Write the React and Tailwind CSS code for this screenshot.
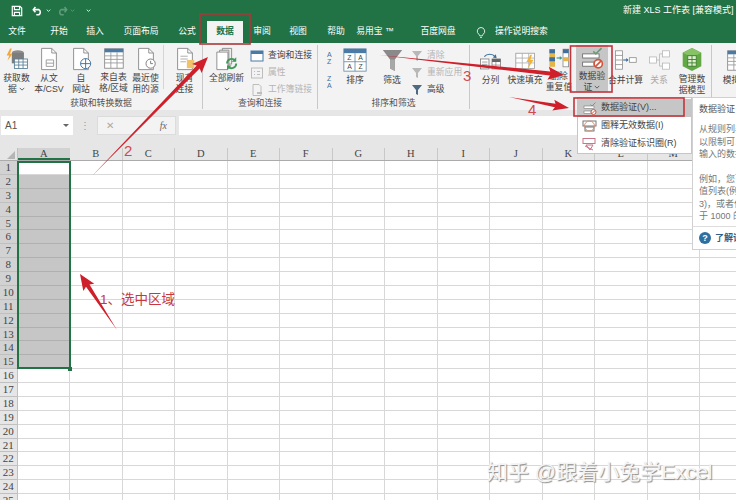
const tabs = [
  ["文件", 34, 0], ["开始", 34, 8], ["插入", 34, 2], ["页面布局", 50, 4], ["公式", 34, 4],
  ["数据", 36, 3], ["审阅", 36, 1], ["视图", 36, 0], ["帮助", 36, 2], ["易用宝 ™", 46, -2], ["百度网盘", 56, 12],
];

const Doc = ({ children }) => (
  <svg viewBox="0 0 26 26" className="w-[24px] h-[24px]" fill="none">
    <path d="M5 1.500h11l5 5v18H5z" fill="#fff" stroke="#8a8a8a" />
    <path d="M16 1.500v5h5" stroke="#8a8a8a" />
    {children}
  </svg>
);

const GetData = () => (
  <svg viewBox="0 0 30 26" className="w-[26px] h-[24px]" fill="none">
    <ellipse cx="16" cy="6" rx="7" ry="3" fill="#8c8c8c" />
    <rect x="9" y="6" width="14" height="12" fill="#7d7d7d" />
    <path d="M7 1 3 9h3l-2 6 6-8H7l2-6z" fill="#f2a93b" />
    <rect x="12" y="13" width="15" height="11" fill="#fff" stroke="#5b7f95" />
    <path d="M12 16.500h15M12 20h15M17 13v11M22 13v11" stroke="#5b7f95" />
  </svg>
);

const TableIcon = () => (
  <svg viewBox="0 0 26 26" className="w-[23px] h-[23px]" fill="none">
    <rect x="3" y="2" width="21" height="22" fill="#fff" stroke="#8a8a8a" />
    <rect x="3" y="2" width="21" height="4" fill="#4a7ba6" />
    <path d="M3 10h21M3 14h21M3 18h21M10 6v18M17 6v18" stroke="#9a9a9a" />
  </svg>
);

const Refresh = () => (
  <svg viewBox="0 0 26 26" className="w-[24px] h-[24px]" fill="none">
    <path d="M8 1.500h10v17H8z" fill="#eee" stroke="#8a8a8a" />
    <path d="M5 3.500h10v18H5z" fill="#f6f6f6" stroke="#8a8a8a" />
    <path d="M2 5.500h12v19H2z" fill="#fff" stroke="#8a8a8a" />
    <path d="M13 18a5 5 0 0 1 9-3M23 18a5 5 0 0 1-9 3" stroke="#3f9a57" strokeWidth="2" />
    <path d="M23 11v5h-5zM13 25v-5h5z" fill="#3f9a57" />
  </svg>
);

const SortBig = () => (
  <svg viewBox="0 0 28 28" className="w-[24px] h-[24px]" fill="none">
    <rect x="1" y="1" width="26" height="26" fill="#fff" stroke="#6b8ca8" />
    <rect x="1" y="1" width="26" height="5" fill="#4a7ba6" />
    <path d="M14 6v21M1 16h26" stroke="#6b8ca8" />
    <text x="7.500" y="14.500" textAnchor="middle" fontSize="8" fill="#444">Z</text>
    <text x="20.500" y="14.500" textAnchor="middle" fontSize="8" fill="#444">A</text>
    <text x="7.500" y="25" textAnchor="middle" fontSize="8" fill="#444">A</text>
    <text x="20.500" y="25" textAnchor="middle" fontSize="8" fill="#444">Z</text>
  </svg>
);

const Funnel = () => (
  <svg viewBox="0 0 26 26" className="w-[21px] h-[23px]" preserveAspectRatio="none">
    <path d="M1 1h24L16 12v13l-6-3V12z" fill="#8a8a8a" />
    <path d="M10 12h6v13l-6-3z" fill="#a8a8a8" />
  </svg>
);

const Split = () => (
  <svg viewBox="0 0 30 26" className="w-[23px] h-[23px]" fill="none">
    <path d="M7 8a8 6 0 0 1 14 0" stroke="#3f6f9c" strokeWidth="1.500" />
    <path d="M23 10l-5-1 4-4z" fill="#3f6f9c" />
    <rect x="2" y="11" width="11" height="13" fill="#fff" stroke="#777" />
    <path d="M4 15h7M4 18h7M4 21h7" stroke="#888" />
    <rect x="17" y="11" width="11" height="13" fill="#fff" stroke="#777" />
    <rect x="17" y="11" width="11" height="4" fill="#666" />
    <path d="M17 19h11M22 15v9" stroke="#888" />
  </svg>
);

const FlashFill = () => (
  <svg viewBox="0 0 26 26" className="w-[21px] h-[21px]" fill="none">
    <rect x="1" y="4" width="23" height="19" fill="#fff" stroke="#999" />
    <path d="M1 10h23M1 16h23M9 4v19M17 4v19" stroke="#aaa" />
    <path d="M19 6l-5 9h4l-2 8 7-11h-4l2-6z" fill="#f2b233" />
  </svg>
);

const Dedupe = () => (
  <svg viewBox="0 0 30 26" className="w-[24px] h-[22px]" fill="none">
    <rect x="3" y="2" width="7" height="22" fill="#e4b64a" />
    <path d="M3 2h7v5H3zM3 12h7v5H3z" fill="#3f6f9c" />
    <rect x="20" y="2" width="7" height="22" fill="#fff" stroke="#888" />
    <path d="M20 2h7v5h-7z" fill="#3f6f9c" />
    <path d="M20 12h7v5h-7z" fill="#e4b64a" />
    <path d="M12 13h6" stroke="#3f9a8c" strokeWidth="1.500" />
    <path d="M19 13l-3-2.500v5z" fill="#3f9a8c" />
  </svg>
);

const Validate = ({ small }) => (
  <svg viewBox="0 0 28 26" className={small ? "w-[14px] h-[13px]" : "w-[23px] h-[22px]"} fill="none">
    <rect x="2" y="8" width="20" height="5" fill="#fff" stroke="#666" />
    <rect x="2" y="18" width="14" height="5" fill="#fff" stroke="#666" />
    <path d="M15 5l3 3 7-7" stroke="#6f9a7a" strokeWidth="2" />
    <circle cx="21" cy="20" r="5" fill="#fff" stroke="#d0553f" strokeWidth="2" />
    <path d="M17.500 23.500l7-7" stroke="#d0553f" strokeWidth="2" />
  </svg>
);

const Merge = () => (
  <svg viewBox="0 0 30 26" className="w-[23px] h-[22px]" fill="none">
    <rect x="2" y="1" width="9" height="24" fill="#fff" stroke="#888" />
    <path d="M2 7h9M2 13h9M2 19h9" stroke="#888" />
    <path d="M12 13h6" stroke="#3f6f9c" strokeWidth="1.500" />
    <path d="M19 13l-3-2.500v5z" fill="#3f6f9c" />
    <rect x="20" y="10" width="9" height="6" fill="#fff" stroke="#888" />
  </svg>
);

const Relation = () => (
  <svg viewBox="0 0 30 26" className="w-[23px] h-[22px]" fill="none" stroke="#b5b5b5">
    <rect x="2" y="9" width="9" height="8" fill="#fff" />
    <rect x="19" y="1" width="9" height="8" fill="#fff" />
    <rect x="19" y="17" width="9" height="8" fill="#fff" />
    <path d="M11 13h4M15 5v16M15 5h4M15 21h4" />
  </svg>
);

const DataModel = () => (
  <svg viewBox="0 0 26 26" className="w-[22px] h-[25px]" preserveAspectRatio="none" fill="none">
    <path d="M13 1l11 5v14l-11 5-11-5V6z" fill="#62a845" />
    <path d="M13 1l11 5-11 5L2 6z" fill="#86c266" />
    <rect x="8" y="9" width="10" height="11" fill="#dff0d2" stroke="#3d7f2a" />
    <path d="M8 13h10M8 16.500h10M13 9v11" stroke="#3d7f2a" />
  </svg>
);

const SmallIcon = ({ kind, muted }) => {
  const c = muted ? "#bdbdbd" : "#666";
  if (kind === "funnel")
    return (
      <svg viewBox="0 0 12 12" className="w-3 h-3">
        <path d="M1 1h10L7 6v5L5 10V6z" fill={muted ? "#b8b8b8" : "#4d6a80"} />
      </svg>
    );
  return (
    <svg viewBox="0 0 14 14" className="w-[14px] h-[14px]" fill="none">
      {kind === "query" && (
        <>
          <rect x="1" y="2" width="12" height="10" fill="#fff" stroke="#4a7ba6" />
          <rect x="1" y="2" width="12" height="3" fill="#4a7ba6" />
        </>
      )}
      {kind === "prop" && (
        <>
          <rect x="1.500" y="2" width="11" height="10" stroke={c} />
          <path d="M4 5.500h1M7 5.500h3M4 8.500h1M7 8.500h3" stroke={c} />
        </>
      )}
      {kind === "link" && (
        <>
          <path d="M3 1.500h6l2 2v9H3z" stroke={c} />
          <path d="M7 10h5" stroke={c} strokeWidth="2" />
        </>
      )}
    </svg>
  );
};

const Chevron = () => (
  <svg viewBox="0 0 8 5" className="inline-block w-[6px] h-[4px] ml-0.5 align-middle" fill="none">
    <path d="M1 1l3 3 3-3" stroke="#555" strokeWidth="1.200" />
  </svg>
);

const RibbonBtn = ({ w, icon, lines, muted, active, ml = 0 }) => (
  <div className={`flex flex-col items-center shrink-0 h-[47px] pt-0.5 ${active ? "bg-[#c6c6c6]" : ""}`} style={{ width: w, marginLeft: ml }}>
    <div className="h-[26px] flex items-center justify-center">{icon}</div>
    <div className={`text-center text-[8.800px] leading-[10.500px] mt-0.5 whitespace-nowrap ${muted ? "text-[#aaa]" : "text-[#444]"}`}>
      {lines.map((l, i) => (
        <div key={i}>{l}</div>
      ))}
    </div>
  </div>
);

const SmallRow = ({ kind, label, muted }) => (
  <div className={`flex items-center gap-1 h-[17px] text-[8.800px] whitespace-nowrap ${muted ? "text-[#b5b5b5]" : "text-[#444]"}`}>
    <SmallIcon kind={kind} muted={muted} />
    {label}
  </div>
);

const Group = ({ w, label, children }) => (
  <div className="flex flex-col shrink-0 border-r border-[#c8c8c8] h-[64px] mt-[2px]" style={{ width: w }}>
    <div className="flex h-[50px] items-start">{children}</div>
    <div className="mt-auto text-center text-[8.800px] leading-[11px] text-[#555]">{label}</div>
  </div>
);

const Ribbon = () => (
  <div className="flex h-[67px] bg-[#f3f3f3] overflow-hidden">
    <Group w={203} label="获取和转换数据">
      <RibbonBtn w={33} icon={<GetData />} lines={["获取数", <>据<Chevron /></>]} />
      <RibbonBtn w={32} icon={<Doc><path d="M10 14h8v7h-8zM10 17.500h8" stroke="#999" /></Doc>} lines={["从文", "本/CSV"]} />
      <RibbonBtn w={32} icon={<Doc><circle cx="18" cy="18" r="5.500" fill="#fff" stroke="#3f6f9c" /><path d="M12.500 18h11M18 12.500v11" stroke="#3f6f9c" /></Doc>} lines={["自", "网站"]} />
      <RibbonBtn w={33} icon={<TableIcon />} lines={["来自表", "格/区域"]} />
      <RibbonBtn w={31} icon={<Doc><circle cx="18" cy="18" r="5" fill="#fff" stroke="#777" /><path d="M18 15v3h2.500" stroke="#777" /></Doc>} lines={["最近使", "用的源"]} />
      <div className="w-px h-[44px] bg-[#d5d5d5] mx-0.5 shrink-0" />
      <RibbonBtn w={37} icon={<Doc><path d="M8 10h8M8 13h8M8 16h6" stroke="#aaa" /><path d="M15 14h8v9h-8z" fill="#f0c36a" /></Doc>} lines={["现有", "连接"]} />
    </Group>
    <Group w={115} label="查询和连接">
      <RibbonBtn w={47} icon={<Refresh />} lines={["全部刷新", <Chevron />]} />
      <div className="flex flex-col pt-0.5">
        <SmallRow kind="query" label="查询和连接" />
        <SmallRow kind="prop" label="属性" muted />
        <SmallRow kind="link" label="工作簿链接" muted />
      </div>
    </Group>
    <Group w={152} label="排序和筛选">
      <div className="flex flex-col w-[23px] pl-[9px] pt-1.5 gap-[5px] shrink-0 text-[7px] leading-[7px] text-[#3f6f9c]">
        <div>A<br />Z</div>
        <div className="mt-[5px]">Z<br />A</div>
      </div>
      <RibbonBtn w={28} icon={<SortBig />} lines={["排序"]} />
      <RibbonBtn w={38} ml={4} icon={<Funnel />} lines={["筛选"]} />
      <div className="flex flex-col pt-0.5">
        <SmallRow kind="funnel" label="清除" muted />
        <SmallRow kind="funnel" label="重新应用" muted />
        <SmallRow kind="funnel" label="高级" />
      </div>
    </Group>
    <Group w={242} label="">
      <div className="w-[3px] shrink-0" />
      <RibbonBtn w={35} icon={<Split />} lines={["分列"]} />
      <RibbonBtn w={34} icon={<FlashFill />} lines={["快速填充"]} />
      <RibbonBtn w={34} icon={<Dedupe />} lines={["删除", "重复值"]} />
      <RibbonBtn w={32} icon={<Validate />} lines={["数据验", <>证<Chevron /></>]} active />
      <RibbonBtn w={35} icon={<Merge />} lines={["合并计算"]} />
      <RibbonBtn w={32} icon={<Relation />} lines={["关系"]} muted />
      <RibbonBtn w={34} icon={<DataModel />} lines={["管理数", "据模型"]} />
    </Group>
    <div className="pl-1.5 pt-[2px]">
      <RibbonBtn w={36} icon={<TableIcon />} lines={["模拟分"]} />
    </div>
  </div>
);

const columns = ["B", "C", "D", "E", "F", "G", "H", "I", "J", "K", "L", "M", "N"];
const rows = Array.from({ length: 25 }, (_, i) => i + 1);

const Sheet = () => (
  <div className="relative">
    <div className="flex h-[13px] bg-[#e6e6e6] border-b border-[#ababab] text-[10.500px] leading-[12px] font-['Liberation_Serif',serif] text-[#444]">
      <div className="w-[17.500px] shrink-0 border-r border-[#c0c0c0] relative">
        <div className="absolute right-[2px] bottom-[1px] w-0 h-0 border-l-[8px] border-l-transparent border-b-[8px] border-b-[#b5b5b5]" />
      </div>
      <div className="w-[52.500px] shrink-0 text-center bg-[#d2d2d2] border-b-2 border-[#217346]">A</div>
      {columns.map((c) => (
        <div key={c} className="w-[52.500px] shrink-0 text-center border-r border-[#c8c8c8]">{c}</div>
      ))}
    </div>
    {rows.map((r) => (
      <div key={r} className="flex h-[13.880px]">
        <div className={`w-[17.500px] shrink-0 text-center text-[11px] leading-[13px] font-['Liberation_Serif',serif] text-[#444] border-r border-b border-[#c0c0c0] ${r <= 15 ? "bg-[#d2d2d2]" : "bg-[#e6e6e6]"}`}>
          {r}
        </div>
        <div className={`w-[52.500px] shrink-0 border-r border-b ${r >= 2 && r <= 15 ? "bg-[#c6c6c6] border-[#b0b0b0]" : "border-[#d8d8d8]"}`} />
        {columns.map((c) => (
          <div key={c} className="w-[52.500px] shrink-0 border-r border-b border-[#d8d8d8]" />
        ))}
      </div>
    ))}
    {/* selection box */}
    <div className="absolute left-[17px] top-[13px] w-[54px] h-[208px] border-2 border-[#217346] pointer-events-none" />
    <div className="absolute left-[68px] top-[219px] w-[4px] h-[4px] bg-[#217346] pointer-events-none" />
  </div>
);

const MenuRow = ({ label, children, active }) => (
  <div className={`flex items-center h-[18px] text-[9px] text-[#444] ${active ? "bg-[#c6c6c6]" : ""}`}>
    <div className="w-[23px] flex justify-center shrink-0">{children}</div>
    {label}
  </div>
);

const ValidationMenu = () => (
  <div className="absolute left-[577px] top-[97px] w-[115px] h-[57px] bg-white border border-[#c6c6c6] py-px">
    <MenuRow label="数据验证(V)..." active><Validate small /></MenuRow>
    <MenuRow label="圈释无效数据(I)">
      <svg viewBox="0 0 15 14" className="w-[15px] h-[14px]" fill="none" stroke="#777">
        <rect x="1" y="2" width="13" height="5" />
        <rect x="3" y="8" width="9" height="4" />
        <circle cx="7.500" cy="7" r="5" stroke="#c9967f" />
      </svg>
    </MenuRow>
    <MenuRow label="清除验证标识圈(R)">
      <svg viewBox="0 0 15 14" className="w-[15px] h-[14px]" fill="none" stroke="#c9748a">
        <rect x="1" y="1.500" width="12" height="5" />
        <path d="M4 8h7l-3 5zM3 9l8 4" />
      </svg>
    </MenuRow>
  </div>
);

const Tooltip = () => (
  <div className="absolute left-[692px] top-[97px] w-[120px] h-[153px] bg-white border border-[#d0d0d0] text-[9px] leading-[12.500px] text-[#777] whitespace-nowrap pl-[6px] pt-[5px]">
    <div className="text-[9px] text-[#555] leading-[13px]">数据验证</div>
    <div className="mt-[7px]">从规则列表</div>
    <div>以限制可以</div>
    <div>输入的数据</div>
    <div className="mt-[12px]">例如，您可</div>
    <div>值列表(例</div>
    <div>3)，或者仅</div>
    <div>于 1000 的</div>
    <div className="absolute left-0 right-0 top-[128px] border-t border-[#dedede]" />
    <div className="absolute left-[6px] top-[134px] flex items-center gap-1 font-bold text-[#2f5f87]">
      <span className="w-[12px] h-[12px] rounded-full bg-[#2f6f9f] text-white text-[9px] leading-[12px] text-center">?</span>
      了解详
    </div>
  </div>
);

// tapered arrow, thin at the tail and wide at the head
const Arrow = ({ from, to, head = 14, width = 3 }) => {
  const [x1, y1] = from;
  const [x2, y2] = to;
  const len = Math.hypot(x2 - x1, y2 - y1);
  const ux = (x2 - x1) / len;
  const uy = (y2 - y1) / len;
  const nx = -uy;
  const ny = ux;
  const bx = x2 - ux * head;
  const by = y2 - uy * head;
  const p = (x, y) => `${x.toFixed(1)},${y.toFixed(1)}`;
  const pts = [
    p(x1, y1),
    p(bx + nx * width * 0.7, by + ny * width * 0.7),
    p(bx - ux * 2 + nx * width * 2.2, by - uy * 2 + ny * width * 2.2),
    p(x2, y2),
    p(bx - ux * 2 - nx * width * 2.2, by - uy * 2 - ny * width * 2.2),
    p(bx - nx * width * 0.7, by - ny * width * 0.7),
  ].join(" ");
  return <polygon points={pts} fill="#cf1f2b" />;
};

const Annotations = () => (
  <>
    <svg viewBox="0 0 736 500" className="absolute left-0 top-0 w-[736px] h-[500px] pointer-events-none" fill="none">
      <rect x="200" y="14" width="50" height="30" stroke="#a8383a" strokeWidth="1.600" />
      <rect x="570.500" y="46" width="41.500" height="46" stroke="#c0353c" strokeWidth="1.600" />
      <rect x="574" y="98" width="110" height="18" stroke="#c0353c" strokeWidth="1.600" />
      <Arrow from={[92, 176]} to={[208, 57]} />
      <Arrow from={[379, 55]} to={[564, 75]} />
      <Arrow from={[509, 97]} to={[569, 108]} width={2.500} />
      <Arrow from={[117, 330]} to={[80, 274]} />
    </svg>
    <div className="absolute left-[124px] top-[142px] text-[15px] leading-[18px] text-[#cf4a4f]">2</div>
    <div className="absolute left-[463px] top-[67px] text-[15px] leading-[18px] text-[#cf4a4f]">3</div>
    <div className="absolute left-[528px] top-[101px] text-[15px] leading-[18px] text-[#cf4a4f]">4</div>
    <div className="absolute left-[100px] top-[291px] text-[13.500px] leading-[17px] text-[#c8373f] whitespace-nowrap">1、选中区域</div>
    <div className="absolute left-[487px] top-[459px] text-[21px] leading-[26px] whitespace-nowrap text-[#f4f4f4] [text-shadow:1px_1px_1px_#8c8c8c]">
      知乎 @跟着小兔学Excel
    </div>
  </>
);

export default function App() {
  return (
    <div className="relative w-[736px] h-[500px] overflow-hidden bg-white font-['Liberation_Sans','Noto_Sans_CJK_SC',sans-serif]">
      <div className="bg-[#217346] h-[43px] text-white">
        <div className="flex items-center h-[21px] pl-[11px]">
          <svg viewBox="0 0 14 14" className="w-[12px] h-[12px]" fill="none" stroke="#fff" strokeWidth="1.400">
            <path d="M1.500 1.500h9l2 2v9h-11z" />
            <path d="M4 1.500v4h6v-4M4 12.500v-4h6v4" />
          </svg>
          <svg viewBox="0 0 14 12" className="w-[12px] h-[11px] ml-[9px]" fill="none" stroke="#fff" strokeWidth="1.800">
            <path d="M4 2 1.500 5 4 8M2 5h6a3.500 3.500 0 0 1 0 6H5" />
          </svg>
          <Chevron2 className="ml-[2px]" stroke="#fff" />
          <svg viewBox="0 0 14 12" className="w-[12px] h-[11px] ml-[5px]" fill="none" stroke="#5f9c7c" strokeWidth="1.800">
            <path d="M10 2l2.500 3L10 8M12 5H6a3.500 3.500 0 0 0 0 6h3" />
          </svg>
          <Chevron2 className="ml-[2px]" stroke="#5f9c7c" />
          <Chevron2 className="ml-[11px]" stroke="#fff" />
          <div className="ml-auto text-[9px] whitespace-nowrap w-[113px] shrink-0 overflow-hidden">新建 XLS 工作表 [兼容模式]</div>
        </div>
        <div className="flex items-stretch h-[22px] text-[8.800px]">
          {tabs.map(([t, w, ml]) => (
            <div key={t} className={`flex items-center justify-center shrink-0 ${t === "数据" ? "bg-[#f3f3f3] text-[#217346] font-bold" : ""}`} style={{ width: w, marginLeft: ml }}>
              {t}
            </div>
          ))}
          <div className="flex items-center gap-[9px] ml-[10px]">
            <svg viewBox="0 0 12 14" className="w-[10px] h-[13px]" fill="none" stroke="#fff">
              <path d="M6 1a4.500 4.500 0 0 0-2.500 8.200L4.500 11h3l1-1.800A4.500 4.500 0 0 0 6 1zM5 13h2" />
            </svg>
            操作说明搜索
          </div>
        </div>
      </div>
      <Ribbon />
      <div className="flex items-center h-[38px] bg-[#e6e6e6] pt-[1px] pb-[9px] text-[10px] text-[#555]">
        <div className="flex items-center justify-between w-[72px] h-[19px] ml-px bg-white px-1">
          A1
          <span className="w-0 h-0 border-x-[3px] border-x-transparent border-t-[3px] border-t-[#666]" />
        </div>
        <span className="w-[24px] text-center text-[#999]">⋮</span>
        <div className="flex items-center justify-between w-[79px] h-[19px] bg-[#f3f3f3] border border-[#dcdcdc] px-2 text-[#aaa]">
          ✕
          <i className="font-['Liberation_Serif',serif] text-[#666]">fx</i>
        </div>
        <div className="flex-1 h-[19px] ml-[3px] bg-white" />
      </div>
      <Sheet />
      <ValidationMenu />
      <Tooltip />
      <Annotations />
    </div>
  );
}

function Chevron2({ className, stroke }) {
  return (
    <svg viewBox="0 0 8 5" className={`w-[5px] h-[3px] ${className}`} fill="none">
      <path d="M1 1l3 3 3-3" stroke={stroke} strokeWidth="1.400" />
    </svg>
  );
}
